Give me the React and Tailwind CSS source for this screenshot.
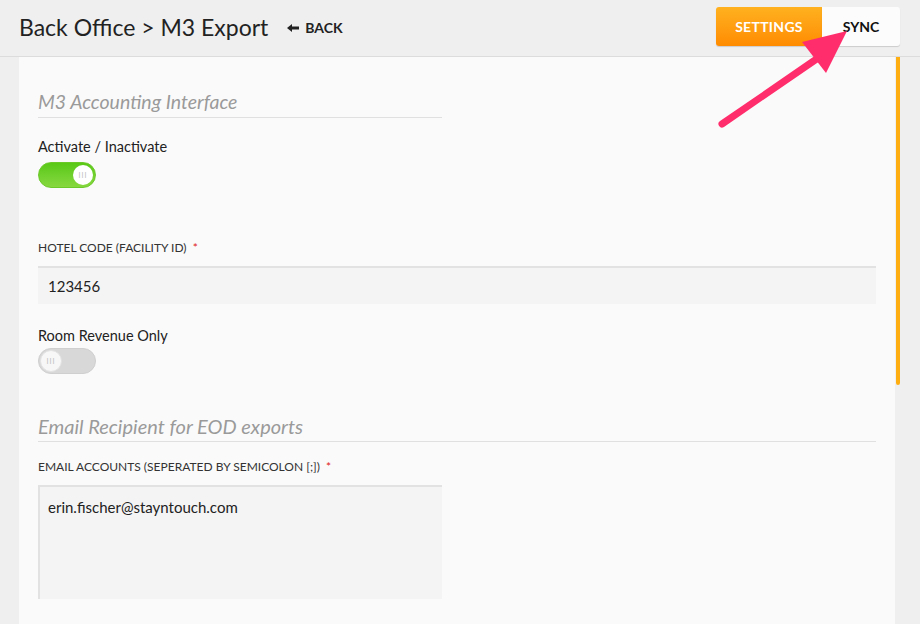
import React from 'react';

const font = { fontFamily: 'Lato, "Open Sans", sans-serif' };

const Toggle = ({ on }) => {
  if (on) {
    return (
      <div className="relative h-[26px] w-[58px] rounded-full bg-gradient-to-b from-[#58c914] to-[#86d83e] border border-[#6cc92a]">
        <div className="absolute right-[2px] top-[2px] flex h-[20px] w-[20px] items-center justify-center rounded-full bg-white">
          <span className="text-[7px] leading-none tracking-[1px] text-[#bbb]">III</span>
        </div>
      </div>
    );
  }
  return (
    <div className="relative h-[26px] w-[58px] rounded-full bg-[#d8d8d8] border border-[#cfcfcf]">
      <div className="absolute left-[1px] top-[1px] flex h-[22px] w-[22px] items-center justify-center rounded-full bg-[#f7f7f7] border border-[#e2e2e2]">
        <span className="text-[7px] leading-none tracking-[1px] text-[#bbb]">III</span>
      </div>
    </div>
  );
};

const Label = ({ children }) => (
  <div className="text-[12px] leading-[16px] uppercase text-[#333]">
    {children} <span className="ml-[3px] text-[#e02020]">*</span>
  </div>
);

export default function App() {
  return (
    <div className="relative h-[624px] w-[920px] overflow-hidden bg-[#efefef]" style={font}>
      {/* header */}
      <div className="flex h-[57px] items-center border-b border-[#dcdcdc] pl-[19px] pr-[20px] pb-[3px]">
        <h1 className="text-[23px] leading-[30px] text-[#222]">Back Office &gt; M3 Export</h1>
        <button className="ml-[19px] flex items-center gap-[6px] text-[14px] font-bold text-[#222] mt-[2px]">
          <svg width="12" height="10" viewBox="0 0 12 10">
            <path d="M0 5 L5 1 L5 3.5 L12 3.5 L12 6.5 L5 6.5 L5 9 Z" fill="#222" />
          </svg>
          BACK
        </button>
        <div className="ml-auto flex">
          <button className="h-[39px] w-[106px] rounded-l-[3px] bg-gradient-to-b from-[#ffb11e] to-[#ff8b00] text-[14px] font-bold tracking-[0.3px] text-white shadow-[0_1px_1px_rgba(0,0,0,0.15)]">
            SETTINGS
          </button>
          <button className="h-[39px] w-[78px] rounded-r-[3px] bg-[#fcfcfc] text-[14px] font-bold text-[#111] shadow-[0_1px_1px_rgba(0,0,0,0.15)]">
            SYNC
          </button>
        </div>
      </div>

      {/* body */}
      <div className="flex h-[567px] pl-[19px] pr-[20px]">
        <div className="flex-1 bg-[#fafafa] pl-[19px] pr-[19px] pt-[32px]">
          <div className="w-[404px] border-b border-[#e0e0e0] pb-[3px]">
            <h2 className="text-[19.5px] italic leading-[25px] text-[#9a9a9a]">M3 Accounting Interface</h2>
          </div>

          <div className="mt-[19px] text-[14.5px] leading-[20px] text-[#222]">Activate / Inactivate</div>
          <div className="mt-[5px]"><Toggle on /></div>

          <div className="mt-[52px]"><Label>Hotel Code (Facility ID)</Label></div>
          <div className="mt-[10px] flex h-[38px] items-center border-t-2 border-[#e2e2e2] bg-[#f4f4f4] pl-[10px] text-[15px] text-[#222]">
            123456
          </div>

          <div className="mt-[22px] text-[14.5px] leading-[20px] text-[#222]">Room Revenue Only</div>
          <div className="mt-[2px]"><Toggle /></div>

          <div className="mt-[40px] border-b border-[#e0e0e0] pb-[2px]">
            <h2 className="text-[20px] italic leading-[25px] text-[#9a9a9a]">Email Recipient for EOD exports</h2>
          </div>

          <div className="mt-[17px]"><Label>Email Accounts (Seperated by Semicolon [;])</Label></div>
          <div className="mt-[10px] h-[114px] w-[404px] border-t-2 border-l-2 border-[#e2e2e2] bg-[#f4f4f4] pl-[8px] pt-[10px] text-[15px] leading-[20px] text-[#222]">
            erin.fischer@stayntouch.com
          </div>
        </div>
        <div className="w-[5px]">
          <div className="ml-[1px] h-[328px] w-[4px] rounded-b-[2px] bg-[#ffae12]" />
        </div>
      </div>

      {/* annotation arrow */}
      <svg className="pointer-events-none absolute left-0 top-0" width="920" height="624">
        <line x1="722" y1="124" x2="818" y2="58" stroke="#ff2d6b" strokeWidth="7" strokeLinecap="round" />
        <polygon points="847,31 802,42 826,73" fill="#ff2d6b" />
      </svg>
    </div>
  );
}
